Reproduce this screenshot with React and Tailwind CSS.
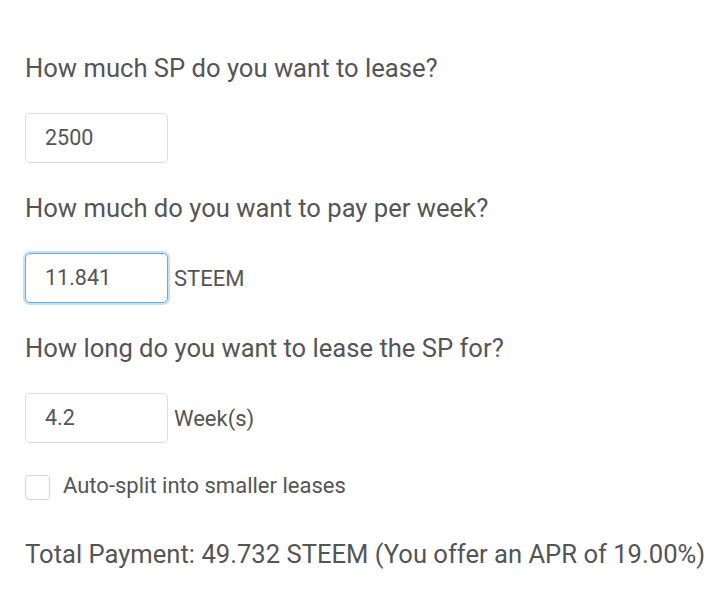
export default function App() {
  const font = { fontFamily: "Roboto, 'Liberation Sans', sans-serif" };
  return (
    <div className="min-h-[599px] w-[720px] bg-white pl-[25px] pt-[52px] text-[#555]" style={font}>
      <div className="h-[32px] text-[25.6px] leading-[32px]">How much SP do you want to lease?</div>
      <div className="mt-[29px] flex items-center">
        <div className="flex h-[50px] w-[143px] items-center rounded-[5px] border border-[#dcdcdc] pl-[19px] text-[21.5px]">2500</div>
      </div>
      <div className="mt-[29px] h-[32px] text-[25.6px] leading-[32px]">How much do you want to pay per week?</div>
      <div className="mt-[29px] flex items-center">
        <div className="flex h-[50px] w-[143px] items-center rounded-[5px] border border-[#66ade0] pl-[19px] text-[21.5px] shadow-[0_0_0_2px_#c4e2f6]">11.841</div>
        <span className="ml-[6px] text-[22px]">STEEM</span>
      </div>
      <div className="mt-[29px] h-[32px] text-[25.6px] leading-[32px]">How long do you want to lease the SP for?</div>
      <div className="mt-[29px] flex items-center">
        <div className="flex h-[50px] w-[143px] items-center rounded-[5px] border border-[#dcdcdc] pl-[19px] text-[21.5px]">4.2</div>
        <span className="ml-[6px] text-[22px]">Week(s)</span>
      </div>
      <div className="mt-[29px] flex items-center">
        <div className="h-[25px] w-[25px] rounded-[4px] border border-[#d6d6d6]" />
        <span className="ml-[13px] -mt-[3px] text-[22px]">Auto-split into smaller leases</span>
      </div>
      <div className="mt-[36px] h-[32px] text-[25.6px] leading-[32px]">Total Payment: 49.732 STEEM (You offer an APR of 19.00%)</div>
    </div>
  );
}
